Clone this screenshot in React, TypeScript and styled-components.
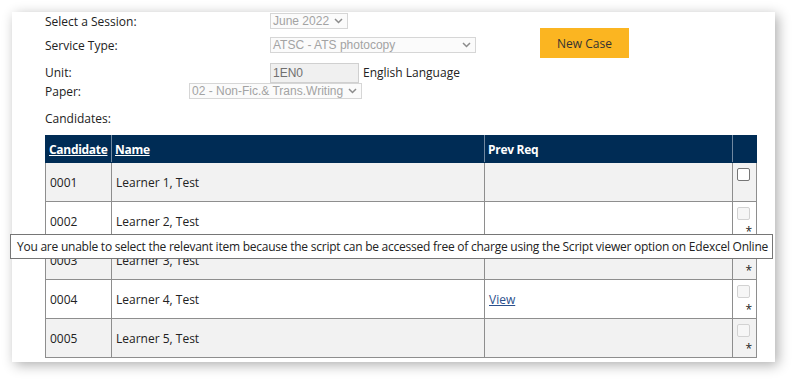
import React from 'react';
import styled, { createGlobalStyle } from 'styled-components';

const GlobalStyle = createGlobalStyle`
  html, body {
    margin: 0;
    padding: 0;
    background: #ffffff;
  }
  body {
    font-family: 'Open Sans', 'Noto Sans', sans-serif;
    font-size: 12px;
    color: #222;
  }
`;

const Page = styled.div`
  position: relative;
  width: 793px;
  height: 380px;
  padding: 12px 0 0 12px;
  box-sizing: border-box;
  overflow: hidden;
`;

const Card = styled.div`
  width: 763px;
  height: 350px;
  background: #fff;
  box-shadow: 3px 3px 12px rgba(0, 0, 0, 0.32);
  padding-left: 33px;
  box-sizing: border-box;
`;

const Top = styled.div`
  display: flex;
`;

const Form = styled.div`
  width: 495px;
  display: flex;
  flex-direction: column;
`;

const Row = styled.div<{ $h: number; $mt?: number }>`
  display: flex;
  align-items: center;
  height: ${(p) => p.$h}px;
  margin-top: ${(p) => p.$mt ?? 0}px;
`;

const Label = styled.div<{ $w?: number }>`
  width: ${(p) => p.$w ?? 225}px;
  flex: none;
  color: #222;
`;

const Select = styled.div<{ $w: number }>`
  position: relative;
  width: ${(p) => p.$w}px;
  height: 16px;
  box-sizing: border-box;
  border: 1px solid #d6d6d6;
  background: #fbfbfb;
  color: #a3a3a3;
  font-family: 'Liberation Sans', Arial, sans-serif;
  font-size: 12px;
  line-height: 14px;
  padding-left: 2px;
  display: flex;
  align-items: center;
  justify-content: space-between;
  svg {
    margin-right: 4px;
  }
`;

const Input = styled.div`
  width: 89px;
  height: 20px;
  box-sizing: border-box;
  border: 1px solid #d0d0d0;
  background: #f0f0f0;
  color: #6f6f6f;
  font-family: 'Liberation Sans', Arial, sans-serif;
  font-size: 12px;
  line-height: 18px;
  padding-left: 2px;
`;

const UnitName = styled.span`
  margin-left: 4px;
`;

const ButtonCol = styled.div`
  padding-top: 16px;
`;

const Button = styled.button`
  width: 89px;
  height: 30px;
  border: none;
  background: #fbb521;
  color: #333;
  font-family: 'Open Sans', sans-serif;
  font-size: 12px;
  padding: 0;
`;

const Table = styled.table`
  margin-top: 8px;
  width: 711px;
  border-collapse: collapse;
  table-layout: fixed;
`;

const Th = styled.th<{ $w?: number }>`
  width: ${(p) => (p.$w ? `${p.$w}px` : 'auto')};
  height: 27px;
  padding: 0 3px;
  box-sizing: border-box;
  background: #002c55;
  color: #fff;
  font-weight: 700;
  letter-spacing: -0.3px;
  white-space: nowrap;
  text-align: left;
  border: 1px solid #002c55;
  border-right-color: #7088a0;
  &:last-child {
    border-right-color: #002c55;
  }
  a {
    color: #fff;
    text-decoration: underline;
  }
`;

const Tr = styled.tr<{ $alt: boolean }>`
  background: ${(p) => (p.$alt ? '#f2f2f2' : '#ffffff')};
`;

const Td = styled.td<{ $check?: boolean }>`
  height: 39px;
  padding: ${(p) => (p.$check ? '4px 5px 0 0' : '0 4px')};
  box-sizing: border-box;
  border: 1px solid #8e8e8e;
  vertical-align: ${(p) => (p.$check ? 'top' : 'middle')};
  text-align: ${(p) => (p.$check ? 'right' : 'left')};
  color: #222;
  a {
    color: #2a4f8c;
    text-decoration: underline;
  }
`;

const Check = styled.span<{ $disabled?: boolean }>`
  display: inline-block;
  width: 13px;
  height: 13px;
  box-sizing: border-box;
  margin: 1px 1px 0 0;
  border-radius: 2px;
  border: 1px solid ${(p) => (p.$disabled ? '#d2d2d2' : '#767676')};
  background: ${(p) => (p.$disabled ? '#f6f6f6' : '#fff')};
  vertical-align: top;
`;

const Star = styled.div`
  font-size: 12px;
  line-height: 12px;
  margin-top: 3px;
  margin-right: -1px;
`;

const Tooltip = styled.div`
  position: absolute;
  left: 10px;
  top: 234px;
  width: 763px;
  height: 25px;
  box-sizing: border-box;
  border: 1px solid #767676;
  background: #fff;
  color: #222;
  padding: 0 6px;
  line-height: 23px;
  letter-spacing: -0.24px;
  white-space: nowrap;
`;

const Chevron = () => (
  <svg width="9" height="6" viewBox="0 0 9 6">
    <path d="M1 1 L4.5 4.5 L8 1" fill="none" stroke="#8c8c8c" strokeWidth="1.5" />
  </svg>
);

const rows = [
  { id: '0001', name: 'Learner 1, Test', prev: '', enabled: true },
  { id: '0002', name: 'Learner 2, Test', prev: '', enabled: false },
  { id: '0003', name: 'Learner 3, Test', prev: '', enabled: false },
  { id: '0004', name: 'Learner 4, Test', prev: 'View', enabled: false },
  { id: '0005', name: 'Learner 5, Test', prev: '', enabled: false },
];

export default function App() {
  return (
    <Page>
      <GlobalStyle />
      <Card>
        <Top>
          <Form>
            <Row $h={18}>
              <Label>Select a Session:</Label>
              <Select $w={78}>
                June 2022
                <Chevron />
              </Select>
            </Row>
            <Row $h={18} $mt={6}>
              <Label>Service Type:</Label>
              <Select $w={206}>
                ATSC - ATS photocopy
                <Chevron />
              </Select>
            </Row>
            <Row $h={21} $mt={8}>
              <Label>Unit:</Label>
              <Input>1EN0</Input>
              <UnitName>English Language</UnitName>
            </Row>
            <Row $h={16}>
              <Label $w={144}>Paper:</Label>
              <Select $w={173}>
                02 - Non-Fic.&amp; Trans.Writing
                <Chevron />
              </Select>
            </Row>
            <Row $h={18} $mt={10}>
              <Label>Candidates:</Label>
            </Row>
          </Form>
          <ButtonCol>
            <Button>New Case</Button>
          </ButtonCol>
        </Top>
        <Table>
          <thead>
            <tr>
              <Th $w={66}>
                <a>Candidate</a>
              </Th>
              <Th $w={373}>
                <a>Name</a>
              </Th>
              <Th $w={248}>Prev Req</Th>
              <Th $w={24}></Th>
            </tr>
          </thead>
          <tbody>
            {rows.map((r, i) => (
              <Tr key={r.id} $alt={i % 2 === 0}>
                <Td>{r.id}</Td>
                <Td>{r.name}</Td>
                <Td>{r.prev && <a>{r.prev}</a>}</Td>
                <Td $check>
                  <Check $disabled={!r.enabled} />
                  {!r.enabled && <Star>*</Star>}
                </Td>
              </Tr>
            ))}
          </tbody>
        </Table>
      </Card>
      <Tooltip>
        You are unable to select the relevant item because the script can be accessed free of charge using the Script viewer option on Edexcel Online
      </Tooltip>
    </Page>
  );
}
